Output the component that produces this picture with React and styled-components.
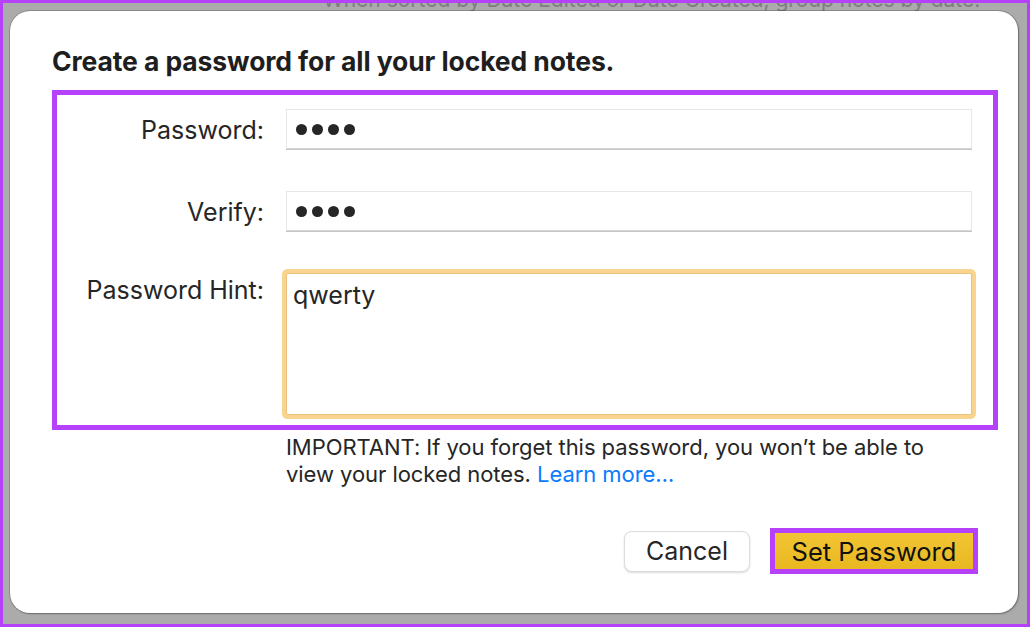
import React from "react";
import styled, { createGlobalStyle } from "styled-components";

const Global = createGlobalStyle`
  html, body { margin: 0; padding: 0; }
  body { font-family: Inter, "Noto Sans", "Liberation Sans", sans-serif; }
  * { box-sizing: border-box; }
`;

const Frame = styled.div`
  width: 1030px;
  height: 627px;
  border: 3px solid #b541fb;
  background: #ababab;
  display: grid;
  overflow: hidden;
`;

const Layer = styled.div`
  grid-area: 1 / 1;
  min-width: 0;
  min-height: 0;
`;

const BackText = styled.div`
  margin-top: -14px;
  margin-left: 320px;
  font-size: 21px;
  line-height: 22px;
  color: #7e7e7e;
  white-space: nowrap;
`;

const Dialog = styled.div`
  grid-area: 1 / 1;
  margin: 8px 9px 11px 7px;
  background: #ffffff;
  border-radius: 20px;
  box-shadow: 0 0 0 1px rgba(0, 0, 0, 0.18), 1px 1px 2px rgba(0, 0, 0, 0.25);
  padding: 35px 20px 0 42px;
  display: flex;
  flex-direction: column;
  color: #262626;
`;

const Title = styled.h1`
  margin: 0;
  font-size: 26.5px;
  line-height: 30px;
  font-weight: 700;
  color: #1e1e1e;
  letter-spacing: -0.1px;
`;

const Highlight = styled.div`
  margin-top: 14px;
  border: 5px solid #b541fb;
  padding: 14px 21px 10px 0;
  display: grid;
  grid-template-columns: 207px 1fr;
  column-gap: 22px;
  row-gap: 42px;
`;

const Label = styled.div`
  text-align: right;
  font-size: 25px;
  line-height: 30px;
  color: #262626;
  align-self: ${(p) => (p.$top ? "start" : "center")};
  padding-top: 2px;
`;

const Field = styled.div`
  height: 40px;
  background: #fff;
  border: 1px solid #e6e6ec;
  border-bottom-color: #d4d4d4;
  box-shadow: 0 1px 0 #c6c6c6;
  display: flex;
  align-items: center;
  gap: 5px;
  padding-left: 9px;
`;

const Dot = styled.span`
  width: 11px;
  height: 11px;
  border-radius: 50%;
  background: #262626;
`;

const HintArea = styled.div`
  height: 142px;
  background: #fff;
  border: 1px solid #e8c27d;
  border-radius: 2px;
  box-shadow: 0 0 0 4px #f9d48f;
  padding: 5px 6px;
  font-size: 25px;
  line-height: 32px;
  color: #262626;
`;

const Note = styled.p`
  margin: 4px 0 0 234px;
  font-size: 22px;
  line-height: 27px;
  color: #262626;
  letter-spacing: -0.05px;
`;

const Link = styled.span`
  color: #0a7bff;
`;

const Buttons = styled.div`
  margin-top: 40px;
  margin-right: 20px;
  display: flex;
  justify-content: flex-end;
  align-items: center;
  gap: 20px;
`;

const CancelButton = styled.div`
  width: 126px;
  height: 41px;
  border-radius: 8px;
  background: #fff;
  border: 1px solid #dcdce2;
  box-shadow: 0 1px 2px rgba(0, 0, 0, 0.15);
  display: flex;
  align-items: center;
  justify-content: center;
  font-size: 25px;
  color: #262626;
`;

const PrimaryWrap = styled.div`
  border: 5px solid #b541fb;
  width: 208px;
  height: 46px;
  display: flex;
`;

const PrimaryButton = styled.div`
  flex: 1;
  background: linear-gradient(#f2c535, #e9b820);
  display: flex;
  align-items: center;
  justify-content: center;
  font-size: 25.5px;
  color: #111;
`;

export default function App() {
  return (
    <>
      <Global />
      <Frame>
        <Layer>
          <BackText>When sorted by Date Edited or Date Created, group notes by date.</BackText>
        </Layer>
        <Dialog>
          <Title>Create a password for all your locked notes.</Title>
          <Highlight>
            <Label>Password:</Label>
            <Field>
              <Dot /><Dot /><Dot /><Dot />
            </Field>
            <Label>Verify:</Label>
            <Field>
              <Dot /><Dot /><Dot /><Dot />
            </Field>
            <Label $top>Password Hint:</Label>
            <HintArea>qwerty</HintArea>
          </Highlight>
          <Note>
            IMPORTANT: If you forget this password, you won’t be able to
            <br />
            view your locked notes. <Link>Learn more…</Link>
          </Note>
          <Buttons>
            <CancelButton>Cancel</CancelButton>
            <PrimaryWrap>
              <PrimaryButton>Set Password</PrimaryButton>
            </PrimaryWrap>
          </Buttons>
        </Dialog>
      </Frame>
    </>
  );
}
